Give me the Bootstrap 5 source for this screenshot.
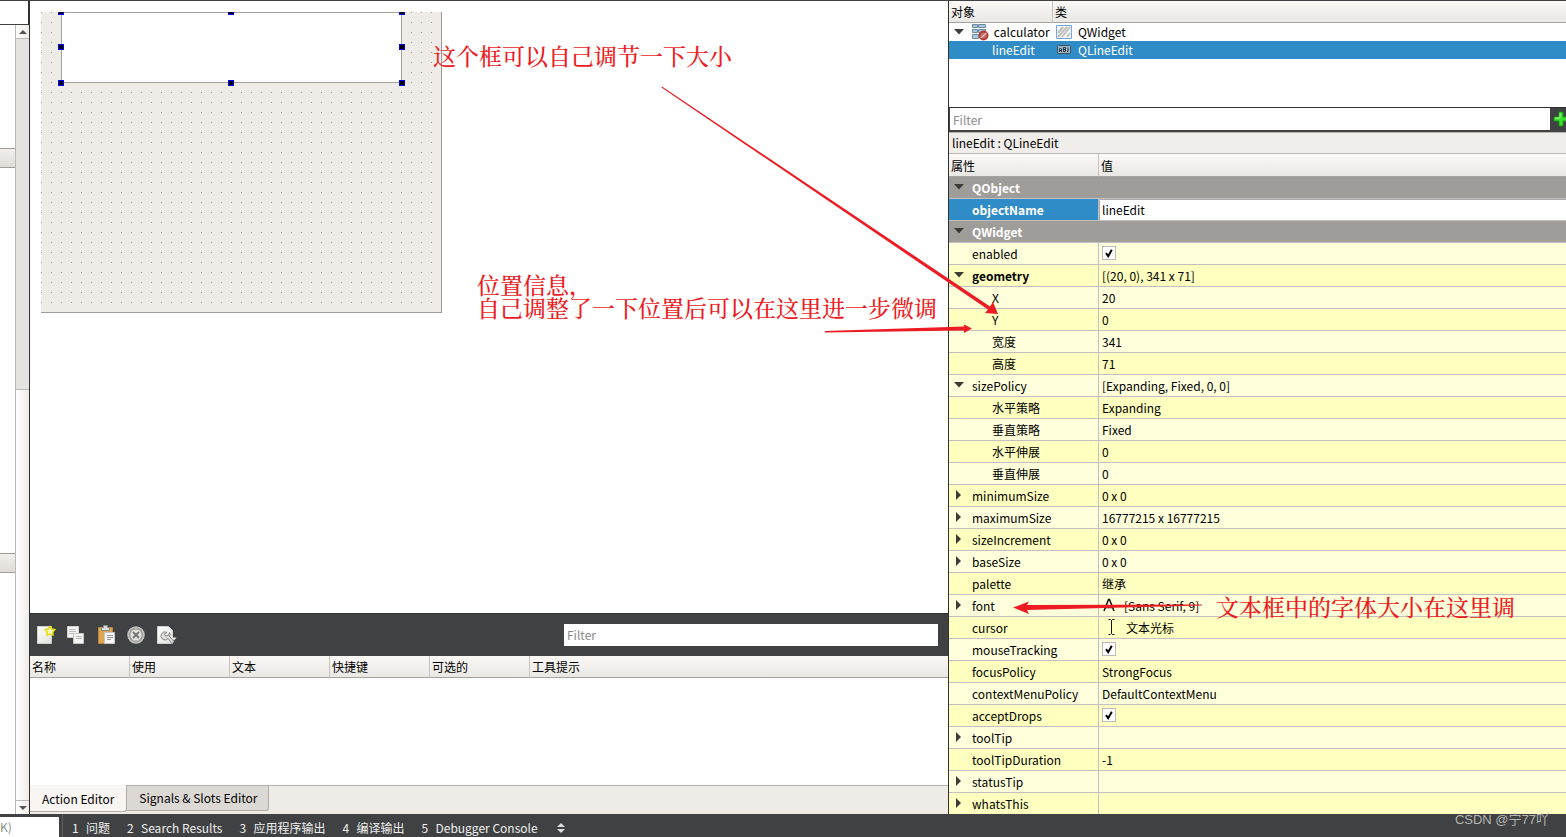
<!DOCTYPE html>
<html lang="zh-CN">
<head>
<meta charset="utf-8">
<meta name="viewport" content="width=device-width, initial-scale=1">
<title>Qt Designer - calculator</title>
<link href="https://cdn.jsdelivr.net/npm/bootstrap@5.3.0/dist/css/bootstrap.min.css" rel="stylesheet">
<style>
:root{--dark:#404142;--edge:#2f3031;--paper:#efebe7;--blue:#308cc6;--red:#ed1c24;--line:#c3c0c3}
body{font-family:"Noto Sans CJK SC",sans-serif;font-size:12px;line-height:20px;color:#000;background:#fff}
.shell{height:100vh;overflow:hidden}
.workspace{display:grid;grid-template-columns:30px minmax(0,153fr) minmax(0,103fr);grid-template-rows:minmax(0,1fr);min-height:0;border-top:1px solid var(--dark)}
.workspace>*{min-width:0;min-height:0;overflow:hidden}
button{border:0;background:none;padding:0;color:inherit}
input{font:inherit;border:0;border-radius:0;outline:0;background:#fff;padding:0 4px;min-width:0}
input::placeholder{color:#8c8c8c;opacity:1}
svg{display:block;flex:none}
table{width:100%;table-layout:fixed;border-collapse:separate;border-spacing:0}
th,td{padding:0;font-weight:400;white-space:nowrap}
.bar-head th{height:22px;padding:1px 2px 0;line-height:20px;text-align:left;background:linear-gradient(#fbf8f6,#e9e8e5);border-bottom:1px solid #a5a19d;border-right:1px solid #c6c3c0}
.bar-head th:last-child{border-right:0}

/* widget box */
.box{border-right:1px solid var(--edge)}
.box-filter{height:24px;border-right:1px solid var(--edge);border-bottom:1px solid var(--dark)}
.box-list{width:15px}
.box-list .cat{height:20px;border:solid #9f9c98;border-width:1px 0;background:linear-gradient(#f2efec,#dfdbd6)}
.cat-first{margin-top:123px}.cat-second{margin-top:385px}
.scroll{width:14px;border-left:1px solid #b9b9b9;background:linear-gradient(90deg,#fff,#f0ebe8)}
.scroll .thumb{height:352px;background:#e4e3df;border:solid #b9b9b9;border-width:1px 0}
.scroll button{height:13px}
.scroll .down{height:14px;border-top:1px solid #b9b9b9}

/* form canvas */
.form-canvas{width:401px;height:301px;margin:11px 0 0 11px;border:solid #9d9b97;border-width:0 1px 1px 0;overflow:hidden;background:conic-gradient(from 270deg at 1px 1px,#a09d98 90deg,transparent 0) 0 0/10px 10px,var(--paper)}
.picked{width:341px;height:71px;margin-left:20px;position:relative}
.picked input{width:100%;height:100%;border:1px solid #a4a3a1}
.grip{position:absolute;width:6px;height:6px;background:#000;border:1px solid #00f}
.gl{left:-3px}.gc{left:167px}.gr{right:-3px}.gt{top:-3px}.gm{top:32px}.gb{bottom:-3px}

/* action editor */
.dock-bar{height:43px;background:var(--dark);border-top:1px solid var(--edge);padding:0 10px 0 6px}
.dock-bar input{width:374px;height:22px;padding:0 3px 1px}
.dock-bar .tools{gap:10px}
.dock-body{height:129px}
.dock-tabs{height:29px;background:var(--paper);border-top:1px solid #b5b1ad}
.dock-tabs button{height:25px;padding:0 11px 0 12px;border:solid #b0aca8;border-width:0 1px 1px 0;background:#dcd8d4;border-radius:0 0 3px 0}
.dock-tabs button.active{height:27px;padding:1px 12px 0;background:#f8f5f2;margin-top:-1px}

/* inspector and properties */
.side{border-left:1px solid var(--edge)}
.tree-area{height:106px}
.tree td{height:18px;line-height:18px}
.tree td:last-child{padding-left:3px}
.tree td:last-child .d-flex{gap:6px}
.tree .sel td{background:var(--blue);color:#fff}
.side-filter{background:var(--dark);padding:0 0 1px 1px;border-top:1px solid var(--edge);height:25px}
.side-filter input{height:22px;padding:0 3px}
.side-filter button{width:16px;padding-left:3px}
.crumb{height:22px;background:#f1edeb;border:solid #b9b5b2;border-width:1px 0;padding-left:3px}
.props .bar-head th{height:23px;padding-top:2px}
.props tbody td{height:22px;line-height:21px;border-bottom:1px solid var(--line);background:#ffffdc}
.props tbody tr:nth-child(odd) td{background:#ffffbf}
.props td:first-child{border-right:1px solid var(--line)}
.props td:last-child{padding-left:3px}
.props tbody tr.group td{background:#9f9d99;color:#fff;font-weight:700;border-right:0;padding-left:0}
.props tbody tr.current td:first-child{background:var(--blue);color:#fff;font-weight:700}
.props tbody tr.current td:last-child{padding:0;background:#fff;border-top:1px solid #aaa;border-left:1px solid #aaa}
.current input{width:100%;height:20px;padding:0 2px;display:block}
.twig{width:23px;flex:none;padding-left:5px}
.twig.closed{padding-left:7px}
.leaf{padding-left:23px}.sub{padding-left:43px}
.props .leaf{display:block}
.tick{appearance:none;display:block;width:14px;height:14px;padding:0;border:1px solid #bbb}
.tick:checked{background:#fff url("data:image/svg+xml,%3Csvg xmlns='http://www.w3.org/2000/svg' viewBox='0 0 12 12'%3E%3Cpath d='M3 6.2 5.2 9.2 8.8 2.8' fill='none' stroke='%23000' stroke-width='2'/%3E%3C/svg%3E")}

/* status bar */
.status{height:23px;background:var(--dark);color:#eee}
.status .locator{width:59px;height:20px;padding:0;margin-top:3px}
.status .panes{margin-left:3px;padding:4px 0 0 9px;gap:17px;border-left:1px solid #606162}
.status .num{display:inline-block;width:14px;text-align:left}
.status button{line-height:20px;white-space:nowrap}

/* notes drawn over the window */
.notes{position:absolute;inset:0;pointer-events:none;overflow:hidden}
.note{position:absolute;color:var(--red);font-family:"Noto Serif CJK SC","Noto Sans CJK SC",serif;font-weight:500;font-size:23px;line-height:23px;white-space:nowrap}
.n1{left:433px;top:44px}.n2{left:477px;top:273px}.n3{left:1216px;top:595px}
.credit{position:absolute;right:17px;bottom:7px;font-size:13px;line-height:20px;color:#b4b4b4;font-family:"Liberation Sans","Noto Sans CJK SC",sans-serif}
</style>
</head>
<body>
<svg width="0" height="0" class="position-absolute">
<defs>
<symbol id="open" viewBox="0 0 10 6"><path d="M0 0h10L5 5.500z" fill="#3c3c36"/></symbol>
<symbol id="shut" viewBox="0 0 5 10"><path d="M0 0v10l5-5z" fill="#3c3c36"/></symbol>
<linearGradient id="sheet" x2="1" y2="1"><stop stop-color="#fff"/><stop offset="1" stop-color="#dfe0da"/></linearGradient>
</defs>
</svg>
<div class="shell d-flex flex-column position-relative">
<main class="workspace flex-grow-1">
  <aside class="box d-flex flex-column">
    <div class="box-filter"></div>
    <div class="d-flex flex-grow-1">
      <div class="box-list"><div class="cat cat-first"></div><div class="cat cat-second"></div></div>
      <div class="scroll d-flex flex-column">
        <button type="button" class="d-flex align-items-center justify-content-center" aria-label="up"><svg width="8" height="4" viewBox="0 0 8 4"><path d="M4 0 8 4H0z" fill="#555"/></svg></button>
        <div class="thumb"></div>
        <button type="button" class="down mt-auto d-flex align-items-center justify-content-center" aria-label="down"><svg width="8" height="4" viewBox="0 0 8 4"><path d="M0 0h8L4 4z" fill="#555"/></svg></button>
      </div>
    </div>
  </aside>

  <section class="d-flex flex-column">
    <div class="flex-grow-1 overflow-hidden">
      <div class="form-canvas">
        <div class="picked"><input type="text" aria-label="lineEdit">
          <i class="grip gl gt"></i><i class="grip gc gt"></i><i class="grip gr gt"></i><i class="grip gl gm"></i><i class="grip gr gm"></i><i class="grip gl gb"></i><i class="grip gc gb"></i><i class="grip gr gb"></i>
        </div>
      </div>
    </div>
    <div class="dock-bar d-flex align-items-center justify-content-between">
      <div class="tools d-flex">
        <button type="button" aria-label="new"><svg width="20" height="20" viewBox="0 0 20 20"><path d="M1.500 1.500h14v17h-14z" fill="url(#sheet)" stroke="#cfcfcb"/><path d="m14 1.500 1.700 2.500 3 .6-1.900 2.400.2 3-3-1-3 1 .2-3-1.900-2.500 3-.5z" fill="#fffbc8" stroke="#e8dc10" stroke-width="1.500"/></svg></button>
        <button type="button" aria-label="copy"><svg width="20" height="20" viewBox="0 0 20 20"><path d="M1.500 1.500h11v11h-11z" fill="#f4f4f2" stroke="#cfcfcb"/><path d="M3 4.500h7M3 6.500h7M3 8.500h4" stroke="#bbb"/><path d="M7.500 8.500h10v10h-10z" fill="#f4f4f2" stroke="#c6c6c2"/><path d="M10 11.500h6M10 13.500h6" stroke="#bbb"/></svg></button>
        <button type="button" aria-label="paste"><svg width="20" height="20" viewBox="0 0 20 20"><path d="M2.500 2.500h14v16h-14z" fill="#dda550" stroke="#b9853a"/><path d="M5.500 5.500v-3h2v-2h4v2h2v3z" fill="#ddd" stroke="#888"/><path d="M8.500 7.500h10v11h-10z" fill="#fafaf8" stroke="#c6c6c2"/><path d="M11 10.500h6M11 12.500h6M11 14.500h4" stroke="#999"/></svg></button>
        <button type="button" aria-label="delete"><svg width="20" height="20" viewBox="0 0 20 20"><circle cx="10" cy="10" r="8" fill="#a5a4a1" stroke="#c2c2be" stroke-width="1.500"/><circle cx="10" cy="10" r="5.500" fill="#e4e4df"/><path d="m7 7 6 6m0-6-6 6" stroke="#777" stroke-width="2"/></svg></button>
        <button type="button" aria-label="configure"><svg width="21" height="20" viewBox="0 0 21 20"><path d="M1.500 1.500h11l4 4v13h-15z" fill="url(#sheet)" stroke="#cfcfcb"/><path d="M12 6.500a4 4 0 1 0 1 6l4 5 2-2-4.500-5a4 4 0 0 0 0-4l-1 3-3 .5-1-2z" transform="translate(-1 1)" fill="#ddd" stroke="#888"/><path d="M15.500 12.500h5L18 15.500z" fill="#eee"/></svg></button>
      </div>
      <input type="text" placeholder="Filter" aria-label="Filter actions">
    </div>
    <div class="dock-body">
      <table class="bar-head"><colgroup><col style="width:100px"><col style="width:100px"><col style="width:100px"><col style="width:100px"><col style="width:100px"><col></colgroup>
      <thead><tr><th>名称</th><th>使用</th><th>文本</th><th>快捷键</th><th>可选的</th><th>工具提示</th></tr></thead></table>
    </div>
    <div class="dock-tabs d-flex align-items-start"><button type="button" class="active">Action Editor</button><button type="button">Signals &amp; Slots Editor</button></div>
  </section>

  <aside class="side d-flex flex-column">
    <div class="tree-area">
      <table class="tree"><colgroup><col style="width:104px"><col></colgroup>
      <thead class="bar-head"><tr><th>对象</th><th>类</th></tr></thead>
      <tbody>
      <tr><td><div class="d-flex align-items-center"><span class="twig"><svg width="10" height="6"><use href="#open"/></svg></span>
        <svg width="17" height="17" viewBox="0 0 17 17"><path d="M.5.500h5v3h-5zM6.500.500h7v3h-7zM.5 5.500h5v3h-5zM6.500 5.500h7v3h-7zM.5 10.500h6v4h-6z" fill="#a9c9de" stroke="#6c8ba1"/><circle cx="11.500" cy="11.500" r="4" fill="#b9706c" stroke="#b93a35" stroke-width="2"/><path d="m8.500 14 6-5" stroke="#e3b5b0" stroke-width="1.500"/></svg>
        <span class="ps-1">&#8202;calculator</span></div></td>
        <td><div class="d-flex align-items-center"><svg width="16" height="14" viewBox="0 0 16 14"><path d="M.5.500h15v13H.5z" fill="#f5f5f3" stroke="#7ba3d6"/><path d="m2 8 5-6M2 12l9-10M6 12l8-10M11 12l3-4" stroke="#bfbfbb" stroke-width="2"/></svg><span>QWidget</span></div></td></tr>
      <tr class="sel"><td><div class="sub">lineEdit</div></td>
        <td><div class="d-flex align-items-center"><svg width="16" height="10" viewBox="0 0 16 10"><rect x="1.500" y=".5" width="13" height="8" rx="1" fill="#9cb5c5" stroke="#3d5363"/><path d="M3.500 7V4l1-1 1 1v3M3.500 5.500h2M7.500 2.500v4h2v-4zM7.500 4.500h2M12 2.500v4h-1" fill="none" stroke="#263b49"/></svg><span>QLineEdit</span></div></td></tr>
      </tbody></table>
    </div>
    <div class="side-filter d-flex align-items-center"><input type="text" class="flex-grow-1" placeholder="Filter" aria-label="Filter properties">
      <button type="button" aria-label="add"><svg width="16" height="16" viewBox="0 0 16 16"><path d="M6 1h4v5h5v4h-5v5H6v-5H1V6h5z" fill="#3ae02c" stroke="#159b12"/><path d="M7 2v5H2" fill="none" stroke="#b5f5a8"/></svg></button></div>
    <div class="crumb">lineEdit : QLineEdit</div>
    <div class="flex-grow-1 overflow-hidden">
    <table class="props"><colgroup><col style="width:150px"><col></colgroup>
    <thead class="bar-head"><tr><th>属性</th><th>值</th></tr></thead>
    <tbody>
    <tr class="group"><td colspan="2"><div class="d-flex align-items-center"><span class="twig"><svg width="10" height="6"><use href="#open"/></svg></span>QObject</div></td></tr>
    <tr class="current"><td><label class="leaf" for="objname">objectName</label></td><td><input id="objname" type="text" value="lineEdit"></td></tr>
    <tr class="group"><td colspan="2"><div class="d-flex align-items-center"><span class="twig"><svg width="10" height="6"><use href="#open"/></svg></span>QWidget</div></td></tr>
    <tr><td><label class="leaf" for="c1">enabled</label></td><td><input id="c1" class="tick" type="checkbox" checked></td></tr>
    <tr><td><div class="d-flex align-items-center fw-bold"><span class="twig"><svg width="10" height="6"><use href="#open"/></svg></span>geometry</div></td><td>[(20, 0), 341 x 71]</td></tr>
    <tr><td><div class="sub">X</div></td><td>20</td></tr>
    <tr><td><div class="sub">Y</div></td><td>0</td></tr>
    <tr><td><div class="sub">宽度</div></td><td>341</td></tr>
    <tr><td><div class="sub">高度</div></td><td>71</td></tr>
    <tr><td><div class="d-flex align-items-center"><span class="twig"><svg width="10" height="6"><use href="#open"/></svg></span>sizePolicy</div></td><td>[Expanding, Fixed, 0, 0]</td></tr>
    <tr><td><div class="sub">水平策略</div></td><td>Expanding</td></tr>
    <tr><td><div class="sub">垂直策略</div></td><td>Fixed</td></tr>
    <tr><td><div class="sub">水平伸展</div></td><td>0</td></tr>
    <tr><td><div class="sub">垂直伸展</div></td><td>0</td></tr>
    <tr><td><div class="d-flex align-items-center"><span class="twig closed"><svg width="5" height="10"><use href="#shut"/></svg></span>minimumSize</div></td><td>0 x 0</td></tr>
    <tr><td><div class="d-flex align-items-center"><span class="twig closed"><svg width="5" height="10"><use href="#shut"/></svg></span>maximumSize</div></td><td>16777215 x 16777215</td></tr>
    <tr><td><div class="d-flex align-items-center"><span class="twig closed"><svg width="5" height="10"><use href="#shut"/></svg></span>sizeIncrement</div></td><td>0 x 0</td></tr>
    <tr><td><div class="d-flex align-items-center"><span class="twig closed"><svg width="5" height="10"><use href="#shut"/></svg></span>baseSize</div></td><td>0 x 0</td></tr>
    <tr><td><div class="leaf">palette</div></td><td>继承</td></tr>
    <tr><td><div class="d-flex align-items-center"><span class="twig closed"><svg width="5" height="10"><use href="#shut"/></svg></span>font</div></td><td><div class="d-flex align-items-center"><svg class="me-2" width="14" height="14" viewBox="0 0 14 14"><path d="M2 13 6.500 1.500h1L12 13M3.500 9.500h7" fill="none" stroke="#111" stroke-width="1.500"/></svg>[Sans Serif, 9]</div></td></tr>
    <tr><td><div class="leaf">cursor</div></td><td><div class="d-flex align-items-center"><svg class="me-2 ms-1" width="12" height="16" viewBox="0 0 12 16"><path d="M2.500.5h2l1 1 1-1h2M5.500 1.500v13M2.500 15.500h2l1-1 1 1h2" fill="none" stroke="#111"/></svg>文本光标</div></td></tr>
    <tr><td><label class="leaf" for="c2">mouseTracking</label></td><td><input id="c2" class="tick" type="checkbox" checked></td></tr>
    <tr><td><div class="leaf">focusPolicy</div></td><td>StrongFocus</td></tr>
    <tr><td><div class="leaf">contextMenuPolicy</div></td><td>DefaultContextMenu</td></tr>
    <tr><td><label class="leaf" for="c3">acceptDrops</label></td><td><input id="c3" class="tick" type="checkbox" checked></td></tr>
    <tr><td><div class="d-flex align-items-center"><span class="twig closed"><svg width="5" height="10"><use href="#shut"/></svg></span>toolTip</div></td><td></td></tr>
    <tr><td><div class="leaf">toolTipDuration</div></td><td>-1</td></tr>
    <tr><td><div class="d-flex align-items-center"><span class="twig closed"><svg width="5" height="10"><use href="#shut"/></svg></span>statusTip</div></td><td></td></tr>
    <tr><td><div class="d-flex align-items-center"><span class="twig closed"><svg width="5" height="10"><use href="#shut"/></svg></span>whatsThis</div></td><td></td></tr>
    </tbody></table>
    </div>
  </aside>
</main>

<footer class="status d-flex flex-shrink-0 overflow-hidden">
  <input class="locator" type="text" placeholder="K)" aria-label="Locator">
  <div class="panes d-flex align-items-center">
    <button type="button"><span class="num">1</span>问题</button>
    <button type="button"><span class="num">2</span>Search Results</button>
    <button type="button"><span class="num">3</span>应用程序输出</button>
    <button type="button"><span class="num">4</span>编译输出</button>
    <button type="button"><span class="num">5</span>Debugger Console</button>
    <button type="button" aria-label="more"><svg width="12" height="10" viewBox="0 0 12 10"><path d="M6 0 10 4H2zM6 10l4-4H2z" fill="#ddd"/></svg></button>
  </div>
</footer>

<div class="notes">
  <svg width="1566" height="837" viewBox="0 0 1566 837" fill="#ed1c24">
    <path d="M662 86.500 990 306.500 993 302 998 314 985 313 988 309.500 661.500 87.500z"/>
    <path d="M825 331 964 326.500V324.500L972 328.500 964 333V330.500L825 332.500z"/>
    <path d="M1013 607.500 1029 601.500 1027 605 1202 604.500V605.500L1027 610 1029 614z"/>
  </svg>
  <div class="note n1">这个框可以自己调节一下大小</div>
  <div class="note n2">位置信息，<br>自己调整了一下位置后可以在这里进一步微调</div>
  <div class="note n3">文本框中的字体大小在这里调</div>
  <div class="credit">CSDN @宁77吖</div>
</div>
</div>
<script src="https://cdn.jsdelivr.net/npm/bootstrap@5.3.0/dist/js/bootstrap.bundle.min.js"></script>
</body>
</html>
